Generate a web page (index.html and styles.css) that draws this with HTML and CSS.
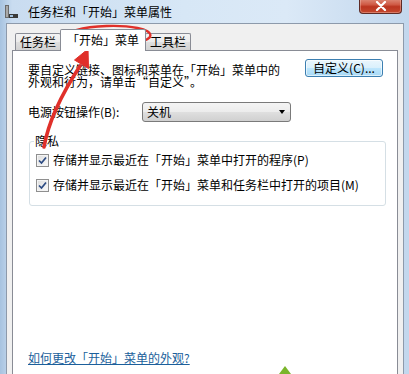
FILE: index.html
```html
<!DOCTYPE html>
<html lang="zh-CN">
<head>
<meta charset="utf-8">
<title>任务栏和「开始」菜单属性</title>
<link rel="stylesheet" href="styles.css">
</head>
<body>
<div class="window">
  <div class="titlebar">
    <svg class="app-icon" width="13" height="13" viewBox="0 0 13 13">
      <rect x="0" y="0" width="4" height="13" fill="#6b6b6b"/>
      <rect x="1" y="1" width="2" height="11" fill="#a9a9a9"/>
      <rect x="4" y="9" width="9" height="4" fill="#3a3a3a"/>
      <rect x="5" y="10" width="3" height="2" fill="#9fc0e0"/>
    </svg>
    <span class="title">任务栏和「开始」菜单属性</span>
    <div class="close">
      <svg width="12" height="10" viewBox="0 0 12 10"><path d="M2 1 L10 9 M10 1 L2 9" stroke="#fff" stroke-width="2.2" stroke-linecap="round"/></svg>
    </div>
  </div>
  <div class="client">
    <div class="tabs">
      <div class="tab">任务栏</div>
      <div class="tab tab-active">「开始」菜单</div>
      <div class="tab">工具栏</div>
    </div>
    <div class="panel">
      <div class="intro">
        <p class="intro-text">要自定义链接、图标和菜单在「开始」菜单中的<br>外观和行为，请单击“自定义”。</p>
        <button class="btn">自定义(C)...</button>
      </div>
      <div class="power">
        <span class="power-label">电源按钮操作(B):</span>
        <div class="select"><span>关机</span><span class="arrow"></span></div>
      </div>
      <fieldset class="group">
        <legend class="legend">隐私</legend>
        <div class="check-row"><span class="checkbox"><svg width="9" height="9" viewBox="0 0 9 9"><path d="M1 4.5 L3.5 7 L8 1.5" fill="none" stroke="#2b4a82" stroke-width="1.7"/></svg></span><span>存储并显示最近在「开始」菜单中打开的程序(P)</span></div>
        <div class="check-row"><span class="checkbox"><svg width="9" height="9" viewBox="0 0 9 9"><path d="M1 4.5 L3.5 7 L8 1.5" fill="none" stroke="#2b4a82" stroke-width="1.7"/></svg></span><span>存储并显示最近在「开始」菜单和任务栏中打开的项目(M)</span></div>
      </fieldset>
      <a class="link" href="#">如何更改「开始」菜单的外观?</a>
    </div>
  </div>
  <svg class="annot" width="409" height="374" viewBox="0 0 409 374">
    <ellipse cx="107" cy="36.5" rx="43.5" ry="10.5" fill="none" stroke="#e0302a" stroke-width="2.4" transform="rotate(-2 107 36.5)"/>
    <path d="M44 147 Q50 112 80 66" fill="none" stroke="#e0302a" stroke-width="3.6" stroke-linecap="round"/>
    <polygon points="88,49 88.5,68.5 74.5,60" fill="#e0302a" stroke="#e0302a" stroke-width="1" stroke-linejoin="round"/>
    <polygon points="285,366 291,374 279,374" fill="#7ab52a"/>
  </svg>
</div>
</body>
</html>
```

FILE: styles.css
```css
* { box-sizing: border-box; margin: 0; padding: 0; }
html, body { width: 409px; height: 374px; overflow: hidden; }
body {
  font-family: "Noto Sans CJK SC", "Liberation Sans", sans-serif;
  font-size: 12px;
  color: #000;
  background: #c4d9ee;
}
.window {
  position: relative;
  width: 409px;
  height: 374px;
  display: flex;
  flex-direction: column;
  background: linear-gradient(to right, #a7c3e0 0, #c9dcf0 3%, #d7e7f6 45%, #dbe9f7 70%, #c2d7ed 100%);
}
.titlebar {
  height: 23px;
  display: flex;
  align-items: flex-start;
  padding-left: 5px;
}
.app-icon { margin-top: 5px; }
.title {
  margin-left: 10px;
  margin-top: 4px;
  line-height: 15px;
  font-size: 12px;
  color: #000;
}
.close {
  margin-left: auto;
  margin-right: 7px;
  width: 43px;
  height: 15px;
  margin-top: -1px;
  border: 1px solid #5e2b26;
  border-top: none;
  border-radius: 0 0 4px 4px;
  background: linear-gradient(#dd8a78 0, #cf5a45 40%, #bb3520 55%, #c4492f 100%);
  display: flex;
  align-items: center;
  justify-content: center;
  box-shadow: inset 0 0 0 1px rgba(255,220,210,0.35);
}
.client {
  flex: 1;
  margin: 0 5px 0 6px;
  background: #f0f0f0;
  border: 1px solid #8d9aab;
  border-bottom: none;
  display: flex;
  flex-direction: column;
  padding: 0 5px;
  min-height: 0;
}
.tabs {
  display: flex;
  align-items: flex-end;
  height: 26px;
  padding-top: 5px;
  padding-left: 3px;
}
.tab {
  height: 17px;
  padding: 0 4px;
  border: 1px solid #898c95;
  border-bottom: none;
  border-radius: 2px 2px 0 0;
  background: linear-gradient(#f3f3f3 0, #ebebeb 50%, #dedede 51%, #d2d2d2 100%);
  line-height: 15px;
  white-space: nowrap;
}
.tab + .tab { margin-left: -1px; }
.tab-active {
  position: relative;
  z-index: 1;
  height: 22px;
  margin: 0 -2px -1px -2px;
  padding: 2px 6px 0;
  background: #fff;
}
.tab-active + .tab { margin-left: 1px; }
.panel {
  flex: 1;
  background: #fff;
  border: 1px solid #898c95;
  border-bottom: none;
  padding: 8px 14px 9px 15px;
  display: flex;
  flex-direction: column;
  min-height: 0;
}
.intro {
  display: flex;
  justify-content: space-between;
  align-items: flex-start;
}
.intro-text {
  margin-top: 5px;
  line-height: 12px;
  white-space: nowrap;
}
.btn {
  width: 78px;
  height: 18px;
  font-family: inherit;
  font-size: 12px;
  line-height: 14px;
  color: #000;
  border: 1px solid #3c7fb1;
  border-radius: 3px;
  background: linear-gradient(#eaf6fd 0, #d9f0fc 50%, #bee6fd 51%, #a7d9f5 100%);
  box-shadow: inset 0 0 0 1px rgba(255,255,255,0.6);
  padding: 0;
}
.power {
  display: flex;
  align-items: center;
  margin-top: 14px;
}
.power-label {
  width: 114px;
  line-height: 14px;
}
.select {
  width: 149px;
  height: 20px;
  border: 1px solid #7a7a7a;
  border-radius: 3px;
  background: linear-gradient(#f4f4f4 0, #ececec 50%, #dfdfdf 51%, #d0d0d0 100%);
  display: flex;
  align-items: center;
  justify-content: space-between;
  padding: 0 5px 0 4px;
  line-height: 14px;
}
.arrow {
  width: 0;
  height: 0;
  border-left: 3.5px solid transparent;
  border-right: 3.5px solid transparent;
  border-top: 4px solid #000;
}
.group {
  margin-top: 13px;
  margin-left: 1px;
  width: 357px;
  border: 1px solid #d5dfe5;
  border-radius: 3px;
  padding: 5px 0 12px 4px;
  display: flex;
  flex-direction: column;
  gap: 9px;
}
.legend {
  padding: 0 1px;
  line-height: 12px;
  margin-left: 0;
}
.check-row {
  display: flex;
  align-items: center;
  height: 16px;
  line-height: 14px;
  gap: 4px;
  padding-left: 2px;
  white-space: nowrap;
}
.checkbox {
  width: 13px;
  height: 13px;
  border: 1px solid #8f8f8f;
  background: linear-gradient(135deg, #dcdcdc, #fbfbfb);
  box-shadow: inset 0 0 0 1px #f4f4f4;
  display: flex;
  align-items: center;
  justify-content: center;
  flex: none;
}
.link {
  margin-top: auto;
  align-self: flex-start;
  color: #1c5f9b;
  line-height: 14px;
  text-decoration: underline;
}
.annot {
  position: absolute;
  left: 0;
  top: 0;
  pointer-events: none;
}
```
